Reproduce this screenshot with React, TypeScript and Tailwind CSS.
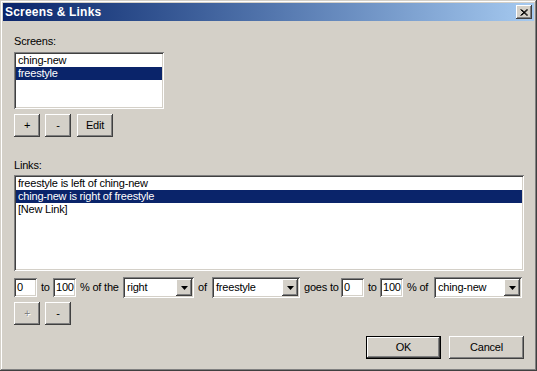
import React from "react";

const raised =
  "shadow-[inset_-1px_-1px_#404040,inset_1px_1px_#ffffff,inset_-2px_-2px_#808080,inset_2px_2px_#d4d0c8]";
const sunken =
  "shadow-[inset_1px_1px_#808080,inset_-1px_-1px_#ffffff,inset_2px_2px_#404040,inset_-2px_-2px_#d4d0c8]";

function Btn({ w, children, disabled }: { w: string; children: React.ReactNode; disabled?: boolean }) {
  return (
    <div className={`${w} h-[23px] bg-[#d4d0c8] ${raised} flex items-center justify-center`}>
      <span
        className={
          disabled ? "text-[#808080] [text-shadow:1px_1px_0_#ffffff] text-[10px]" : "text-black"
        }
      >
        {children}
      </span>
    </div>
  );
}

function Edit({ value }: { value: string }) {
  return (
    <div className={`w-[23px] h-[19px] bg-white ${sunken} pl-[3px] flex items-center`}>{value}</div>
  );
}

function Arrow() {
  return (
    <div className={`w-[16px] h-[17px] bg-[#d4d0c8] ${raised} flex items-center justify-center`}>
      <svg width="7" height="4" viewBox="0 0 7 4">
        <polygon points="0,0 7,0 3.5,4" fill="#000" />
      </svg>
    </div>
  );
}

function Select({ w, value }: { w: string; value: string }) {
  return (
    <div className={`${w} h-[21px] bg-white ${sunken} flex items-center justify-between pl-[4px] pr-[2px]`}>
      <span>{value}</span>
      <Arrow />
    </div>
  );
}

function Label({ w, children }: { w: string; children: React.ReactNode }) {
  return <span className={`${w} pl-[4px] whitespace-nowrap`}>{children}</span>;
}

export default function App() {
  return (
    <div
      className="w-[537px] h-[371px] bg-[#d4d0c8] p-[3px] flex flex-col shadow-[inset_-1px_-1px_#404040,inset_1px_1px_#d4d0c8,inset_-2px_-2px_#808080,inset_2px_2px_#ffffff] text-[11px] leading-[13px] tracking-[-0.2px] text-black"
      style={{ fontFamily: '"Liberation Sans", Arial, sans-serif' }}
    >
      <div className="h-[18px] bg-linear-to-r from-[#0a246a] to-[#a6caf0] flex items-center justify-between pl-[2px] pr-[2px]">
        <span className="text-white font-bold text-[12px] tracking-[0.2px]">Screens &amp; Links</span>
        <div className={`w-[16px] h-[14px] bg-[#d4d0c8] ${raised} flex items-center justify-center`}>
          <svg width="8" height="7" viewBox="0 0 8 7">
            <path d="M0.5 0.5 L7 6.5 M1.5 0.5 L8 6.5 M7 0.5 L0.5 6.5 M8 0.5 L1.5 6.5" stroke="#000" strokeWidth="1" />
          </svg>
        </div>
      </div>

      <div className="flex flex-col pl-[11px] pr-[10px] pt-[14px]">
        <div className="h-[13px]">Screens:</div>
        <div className={`mt-[4px] w-[150px] h-[57px] bg-white ${sunken} p-[2px] flex flex-col`}>
          <div className="h-[13px] pl-[2px]">ching-new</div>
          <div className="h-[13px] pl-[2px] bg-[#0a246a] text-white">freestyle</div>
        </div>
        <div className="mt-[5px] flex gap-[5px]">
          <Btn w="w-[26px]">+</Btn>
          <Btn w="w-[26px]">-</Btn>
          <div className="ml-[1px]">
            <Btn w="w-[36px]">Edit</Btn>
          </div>
        </div>

        <div className="mt-[22px] h-[13px]">Links:</div>
        <div className={`mt-[3px] w-[510px] h-[96px] bg-white ${sunken} p-[2px] flex flex-col`}>
          <div className="h-[13px] pl-[2px]">freestyle is left of ching-new</div>
          <div className="h-[13px] pl-[2px] bg-[#0a246a] text-white">ching-new is right of freestyle</div>
          <div className="h-[13px] pl-[2px]">[New Link]</div>
        </div>

        <div className="mt-[6px] h-[21px] flex items-center">
          <Edit value="0" />
          <Label w="w-[16px]">to</Label>
          <Edit value="100" />
          <Label w="w-[47px]">% of the</Label>
          <Select w="w-[71px]" value="right" />
          <Label w="w-[18px]">of</Label>
          <Select w="w-[88px]" value="freestyle" />
          <Label w="w-[41px]">goes to</Label>
          <Edit value="0" />
          <Label w="w-[16px]">to</Label>
          <Edit value="100" />
          <Label w="w-[31px]">% of</Label>
          <Select w="w-[88px]" value="ching-new" />
        </div>

        <div className="mt-[4px] flex gap-[5px]">
          <Btn w="w-[26px]" disabled>+</Btn>
          <Btn w="w-[26px]">-</Btn>
        </div>

        <div className="mt-[11px] flex justify-end gap-[8px]">
          <div className="w-[75px] h-[23px] bg-[#d4d0c8] shadow-[inset_0_0_0_1px_#000000,inset_-2px_-2px_#404040,inset_2px_2px_#ffffff,inset_-3px_-3px_#808080,inset_3px_3px_#d4d0c8] flex items-center justify-center">
            OK
          </div>
          <Btn w="w-[75px]">Cancel</Btn>
        </div>
      </div>
    </div>
  );
}
